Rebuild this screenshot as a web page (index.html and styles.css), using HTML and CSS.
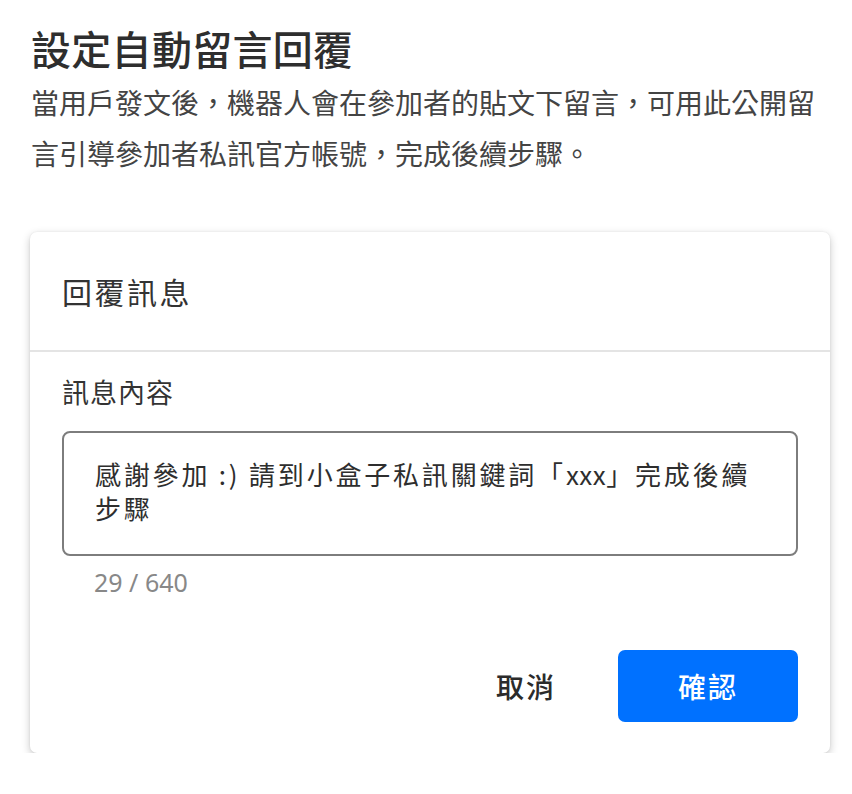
FILE: index.html
```html
<!DOCTYPE html>
<html lang="zh-Hant">
<head>
<meta charset="utf-8">
<title>設定自動留言回覆</title>
<link rel="stylesheet" href="styles.css">
</head>
<body>
<main class="page">
  <h1 class="title">設定自動留言回覆</h1>
  <p class="desc">當用戶發文後<span class="punct">，</span>機器人會在參加者的貼文下留言<span class="punct">，</span>可用此公開留言引導參加者私訊官方帳號<span class="punct">，</span>完成後續步驟<span class="punct">。</span></p>
  <section class="card">
    <header class="card-header">回覆訊息</header>
    <div class="card-body">
      <div class="label">訊息內容</div>
      <div class="textbox">感謝參加 :) 請到小盒子私訊關鍵詞「<span class="latin">xxx</span>」完成後續步驟</div>
      <div class="counter">29 / 640</div>
      <div class="actions">
        <button class="btn btn-text">取消</button>
        <button class="btn btn-primary">確認</button>
      </div>
    </div>
  </section>
</main>
</body>
</html>
```
FILE: styles.css
```css
* { box-sizing: border-box; }
html, body { margin: 0; padding: 0; background: #fff; }
body {
  font-family: "Noto Sans CJK TC", "Noto Sans", sans-serif;
  color: #333;
}
.page {
  padding: 23px 22px 0 30px;
}
.title {
  margin: 0;
  font-size: 40px;
  line-height: 50px;
  font-weight: 500;
  letter-spacing: 0.3px;
  color: #2e2e2e;
  padding-left: 1px;
}
.desc {
  margin: 4px 0 0;
  font-size: 28px;
  line-height: 51px;
  font-weight: 400;
  color: #444;
  width: 800px;
  padding-left: 1px;
}
.punct {
  font-family: "Noto Sans CJK SC", sans-serif;
}
.card {
  margin-top: 53px;
  width: 800px;
  background: #fff;
  border-radius: 7px;
  box-shadow: 0 3px 8px rgba(0,0,0,0.22), 0 0 2px rgba(0,0,0,0.08);
}
.card-header {
  height: 120px;
  display: flex;
  align-items: center;
  padding: 0 32px;
  font-size: 30px;
  letter-spacing: 2.5px;
  color: #333;
  border-bottom: 2px solid #e4e4e4;
}
.card-body {
  padding: 22px 32px 31px;
}
.label {
  font-size: 27px;
  line-height: 36px;
  letter-spacing: 1px;
  color: #333;
}
.textbox {
  margin-top: 21px;
  height: 125px;
  border: 2px solid #7d7d7d;
  border-radius: 8px;
  padding: 24px 31px 0 31px;
  font-size: 26px;
  line-height: 34px;
  letter-spacing: 2.8px;
  color: #2e2e2e;
}
.latin {
  letter-spacing: 0.5px;
}
.counter {
  margin-top: 11px;
  padding-left: 32px;
  font-family: "Noto Sans", sans-serif;
  font-size: 25px;
  line-height: 30px;
  color: #888;
  transform-origin: left center;
}
.actions {
  margin-top: 53px;
  display: flex;
  justify-content: flex-end;
  gap: 32px;
}
.btn {
  height: 72px;
  border: none;
  border-radius: 7px;
  font-family: "Noto Sans CJK TC", sans-serif;
  font-size: 28px;
  letter-spacing: 2px;
  cursor: pointer;
}
.btn-text {
  width: 120px;
  background: transparent;
  color: #2b2b2b;
  font-weight: 500;
}
.btn-primary {
  width: 180px;
  background: #0071ff;
  color: #fff;
  font-weight: 500;
}
```
